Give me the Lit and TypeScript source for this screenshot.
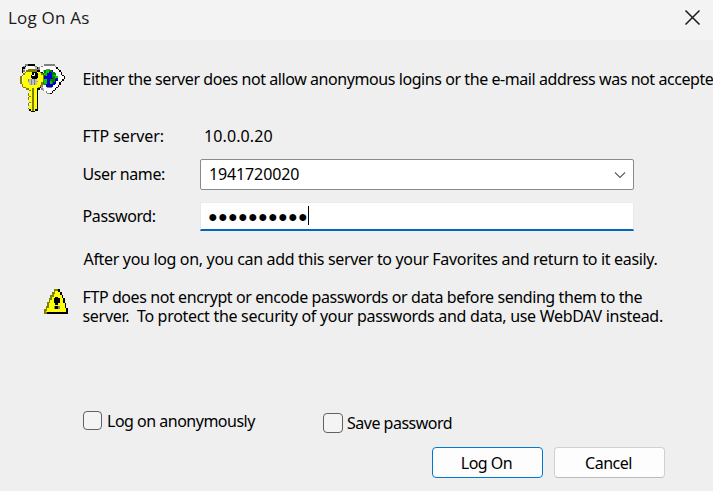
import { LitElement, html, css, svg } from "lit";
import { customElement } from "lit/decorators.js";

/* Pixel-art icons: one letter per cell, looked up in the palette. */
const PALETTE: Record<string, string> = {
  k: "#000000", y: "#ffff00", o: "#808000", w: "#ffffff",
  g: "#808080", s: "#c0c0c0", b: "#0000c8", n: "#008000", l: "#00d000",
};

const KEY = [
  "...ggkkkkk......ggggggg.......",
  "..gkwwwwwsg...gwwwwwwwwg......",
  ".kkswwwwwwskgwwwwwwwwwwwk.....",
  ".kswwooooogggwwwwgggwwwwwk....",
  ".kg.oooooookkwwsnllnnbwwwwk...",
  ".k.oyyyykkkyyokwnllbbnnwwwwk..",
  "..oyyyyykwkkyyonllbbbnnnwwwk..",
  ".owyyyykwskkyyyonlbbbnllwwwwk.",
  "owyyyyykkkkkyyyobbbbbnnllwwwwk",
  "owyyyyyykkkyyyyobbbbbbnnbwwwwk",
  "owyyygsgsgsyyyyollbbnnnbbwwwk.",
  "owyyygsgsgsgyyyollbblnnbwwwk..",
  "oyyyyysgsgsyyyonllbblnbbwwk...",
  ".oyyyysgsgsyyyognbbbbbbwwwk...",
  ".oyyyyyyyyyyyogwwbbbbbwwwk....",
  "..ooyyyyyyyyokswwwgggwwwk.....",
  "....ooyyoyykk.gswwwwwwwk......",
  "......oyoyyk...gwwwwwwk.......",
  "......yyoyyk.....gwwwk........",
  ".....owyoyyk......ggk.........",
  ".....oyyoyyk..................",
  "......oyoyyk..................",
  ".....oyyoyyk..................",
  ".....owyoyyk..................",
  "......yyoyyk..................",
  "......oyoyyk..................",
  ".....owyoyyk..................",
  ".....oyyoyyk..................",
  "......yyoyyk..................",
  ".....oyyoyyk..................",
  "......kyoykk..................",
  ".......kkk....................",
];

const WARNING = [
  "......oook.....",
  "......oyyk.....",
  ".....ooyyyk....",
  ".....oyyyyk....",
  "....ooyyyyyk...",
  "....oyykkyyk...",
  "...ooykkkkyyk..",
  "...oyykkkkyyk..",
  "..ooyykkkkyyk..",
  "..oyyyykkyyyyk.",
  "..oyyyyyyyyyyk.",
  ".ooyyygkkgyyyk.",
  ".oyyyygkkgyyyyk",
  "ooyyyyyyyyyyyyk",
  "oyyyyyyyyyyyyyk",
  "ookkkkkkkkkkkkk",
];

const pixels = (rows: string[]) =>
  rows.flatMap((row, y) =>
    [...row].map((c, x) =>
      c === "." ? null : svg`<rect x=${x} y=${y} width="1.02" height="1.02" fill=${PALETTE[c]}></rect>`
    )
  );

@customElement("app-root")
export class AppRoot extends LitElement {
  static styles = css`
    :host {
      display: block;
      width: 713px;
      height: 491px;
      overflow: hidden;
      background: #efefef;
      color: #000;
      font: 16px/20px "Noto Sans", "Open Sans", sans-serif;
      letter-spacing: -0.38px;
      white-space: nowrap;
    }
    * { box-sizing: border-box; }
    .title {
      display: flex;
      justify-content: space-between;
      height: 40px;
      padding: 7px 12px 0 8px;
      background: #f3f3f3;
      color: #1a1a1a;
      font: 17px/22px "Open Sans", "Noto Sans", sans-serif;
      letter-spacing: 0.2px;
    }
    .close { width: 17px; height: 17px; margin-top: 2px; }
    .intro { display: flex; height: 86px; padding: 24px 0 0 20px; }
    .key { width: 45px; height: 48px; flex: none; }
    .intro span { margin: 5px 0 0 17.5px; letter-spacing: -0.43px; }
    .form { padding-left: 82.5px; }
    .row { display: grid; grid-template-columns: 117.5px 434px; }
    .row.server { height: 33px; letter-spacing: -0.08px; }
    .server .value { padding-left: 4px; letter-spacing: 0.1px; }
    .row.user { height: 43px; }
    .row.pass { height: 47px; }
    .row.user label, .row.pass label { padding-top: 5px; }
    .row.pass label { padding-top: 4px; }
    .combo {
      display: flex;
      justify-content: space-between;
      height: 31px;
      padding: 4px 7px 0 8px;
      border: 1px solid #8a8a8a;
      border-radius: 2px;
      background: #fff;
      letter-spacing: -0.13px;
    }
    .combo svg { width: 12px; height: 8px; margin-top: 7px; }
    .secret {
      display: flex;
      height: 29px;
      padding: 3px 0 0 7px;
      border: 1px solid #e5e8ec;
      border-top-color: #ebebeb;
      border-bottom: 2px solid #0067c0;
      border-radius: 2px 2px 0 0;
      background: #fff;
    }
    .dots { width: 100px; letter-spacing: 0.34px; }
    .caret { width: 1px; height: 19px; background: #000; }
    .note { height: 38px; padding-left: 1px; letter-spacing: -0.33px; }
    .warn { display: flex; height: 124px; padding-left: 44px; line-height: 19px; }
    .warn svg { width: 24px; height: 25px; margin: 2px 14.5px 0 0; flex: none; }
    .warn > div { padding-top: 1px; }
    .warn .first { letter-spacing: -0.41px; }
    .warn .second { letter-spacing: -0.3px; white-space: pre; }
    .checks { display: flex; height: 36px; padding-left: 83px; }
    .check { display: flex; gap: 5px; width: 240px; letter-spacing: -0.5px; }
    .check.save { padding-top: 2px; gap: 4px; }
    .box {
      width: 19px;
      height: 19px;
      border: 1px solid #626262;
      border-radius: 4px;
      background: #f4f4f4;
    }
    .save .box { width: 20px; height: 20px; }
    .buttons { display: flex; gap: 11px; padding-left: 432px; }
    button {
      width: 111px;
      height: 31px;
      padding: 1px 2px 0 0;
      border: 1px solid #d0d0d0;
      border-bottom-color: #bcbcbc;
      border-radius: 4px;
      background: #fdfdfd;
      color: #000;
      font: inherit;
      letter-spacing: -0.5px;
    }
    button.primary { border-color: #0078d4; }
  `;

  render() {
    return html`
      <div class="title">
        <span>Log On As</span>
        <svg class="close" viewBox="0 0 17 17" fill="none" stroke="#1a1a1a" stroke-width="1.5">
          <path d="M1.5 1.5L15.5 15.5M15.5 1.5L1.5 15.5"></path>
        </svg>
      </div>
      <div class="intro">
        <svg class="key" viewBox="0 0 30 32" shape-rendering="crispEdges">${pixels(KEY)}</svg>
        <span>Either the server does not allow anonymous logins or the e-mail address was not accepte</span>
      </div>
      <div class="form">
        <div class="row server">
          <span>FTP server:</span>
          <span class="value">10.0.0.20</span>
        </div>
        <div class="row user">
          <label>User name:</label>
          <div class="combo">
            <span>1941720020</span>
            <svg viewBox="0 0 12 8" fill="none" stroke="#5c5c5c" stroke-width="1.1">
              <path d="M1 1.5L6 6.5L11 1.5"></path>
            </svg>
          </div>
        </div>
        <div class="row pass">
          <label>Password:</label>
          <div class="secret"><span class="dots">●●●●●●●●●●</span><i class="caret"></i></div>
        </div>
        <div class="note">After you log on, you can add this server to your Favorites and return to it easily.</div>
      </div>
      <div class="warn">
        <svg viewBox="0 0 15 16" preserveAspectRatio="none" shape-rendering="crispEdges">${pixels(WARNING)}</svg>
        <div>
          <div class="first">FTP does not encrypt or encode passwords or data before sending them to the</div>
          <div class="second">server.  To protect the security of your passwords and data, use WebDAV instead.</div>
        </div>
      </div>
      <div class="checks">
        <label class="check"><i class="box"></i>Log on anonymously</label>
        <label class="check save"><i class="box"></i>Save password</label>
      </div>
      <div class="buttons">
        <button class="primary">Log On</button>
        <button>Cancel</button>
      </div>
    `;
  }
}
